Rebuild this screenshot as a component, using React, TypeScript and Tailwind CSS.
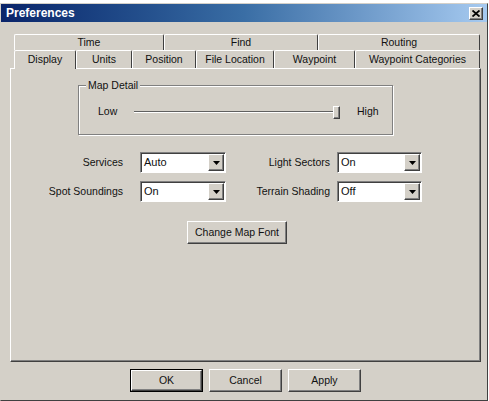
const raised =
  "border border-t-white border-l-white border-r-[#404040] border-b-[#404040] shadow-[inset_-1px_-1px_0_#808080]";
const sunken =
  "border border-t-[#808080] border-l-[#808080] border-r-white border-b-white shadow-[inset_1px_1px_0_#404040]";

const backTabs = [
  { label: "Time", w: "w-[150px]" },
  { label: "Find", w: "w-[154px]" },
  { label: "Routing", w: "w-[162px]" },
];

const frontTabs = [
  { label: "Units", w: "w-[56px]" },
  { label: "Position", w: "w-[64px]" },
  { label: "File Location", w: "w-[78px]" },
  { label: "Waypoint", w: "w-[81px]" },
  { label: "Waypoint Categories", w: "w-[125px]" },
];

function Combo({ value, width }: { value: string; width: string }) {
  return (
    <div className={`flex h-[21px] ${width} bg-white ${sunken} p-[1px] pl-[2px]`}>
      <span className="flex-1 pl-[1px] text-[11px] leading-[17px]">{value}</span>
      <span className={`flex h-[17px] w-[16px] items-center justify-center bg-[#d4d0c8] ${raised}`}>
        <svg width="7" height="4" viewBox="0 0 7 4">
          <path d="M0 0h7L3.5 4z" fill="#000" />
        </svg>
      </span>
    </div>
  );
}

function Row({ left, leftValue, right, rightValue }: { left: string; leftValue: string; right: string; rightValue: string }) {
  return (
    <div className="flex h-[21px] items-center">
      <span className="w-[112px] text-right text-[10.5px]">{left}</span>
      <div className="ml-[17px]">
        <Combo value={leftValue} width="w-[86px]" />
      </div>
      <span className="w-[104px] text-right text-[10.5px]">{right}</span>
      <div className="ml-[7px]">
        <Combo value={rightValue} width="w-[85px]" />
      </div>
    </div>
  );
}

function PushButton({ label, width, isDefault = false }: { label: string; width: string; isDefault?: boolean }) {
  if (isDefault) {
    return (
      <div className={`h-[23px] ${width} border border-black`}>
        <div className={`flex h-full w-full items-center justify-center text-[10.5px] ${raised}`}>{label}</div>
      </div>
    );
  }
  return <div className={`flex h-[23px] ${width} items-center justify-center text-[10.5px] ${raised}`}>{label}</div>;
}

export default function App() {
  return (
    <div className="h-[401px] w-[489px] overflow-hidden bg-white font-['Liberation_Sans',Arial,sans-serif] text-[#111]">
      <div className="mt-[3px] flex h-[398px] w-[488px] flex-col border border-t-[#d4d0c8] border-l-[#d4d0c8] border-r-[#404040] border-b-[#404040] bg-[#d4d0c8]">
        {/* title bar */}
        <div className="flex h-[18px] items-center justify-between bg-gradient-to-r from-[#0a246a] via-[#3a6ea5] to-[#a6caf0] pl-[5px] pr-[4px]">
          <span className="text-[12px] font-bold text-white">Preferences</span>
          <span className={`flex h-[13px] w-[14px] items-center justify-center bg-[#d4d0c8] ${raised}`}>
            <svg width="8" height="7" viewBox="0 0 8 7">
              <path d="M0.5 0.5l7 6M7.5 0.5l-7 6" stroke="#000" strokeWidth="1.8" />
            </svg>
          </span>
        </div>

        {/* tab control */}
        <div className="ml-[9px] mt-[12px] w-[471px]">
          <div className="ml-[4px] flex h-[16px]">
            {backTabs.map((t) => (
              <div
                key={t.label}
                className={`${t.w} flex items-center justify-center rounded-t-[2px] border-t border-l border-r border-t-white border-l-white border-r-[#404040] text-[10.5px]`}
              >
                {t.label}
              </div>
            ))}
          </div>
          <div className="ml-[4px] flex h-[18px] items-end">
            <div className="relative z-10 -mb-px flex h-[19px] w-[62px] items-center justify-center rounded-t-[2px] border-t border-l border-r border-t-white border-l-white border-r-[#404040] bg-[#d4d0c8] text-[10.5px]">
              Display
            </div>
            {frontTabs.map((t) => (
              <div
                key={t.label}
                className={`${t.w} flex h-[18px] items-center justify-center rounded-t-[2px] border-t border-l border-r border-t-white border-l-white border-r-[#404040] text-[10.5px]`}
              >
                {t.label}
              </div>
            ))}
          </div>

          {/* panel */}
          <div className={`h-[294px] w-[471px] ${raised}`}>
            <div className="relative ml-[67px] mt-[16px] h-[50px] w-[315px] border border-[#808080] shadow-[1px_1px_0_#fff,inset_1px_1px_0_#fff]">
              <span className="absolute -top-[8px] left-[7px] bg-[#d4d0c8] px-[2px] text-[10.5px]">Map Detail</span>
              <div className="flex h-full items-center pl-[19px] pt-[4px]">
                <span className="w-[20px] text-[10.5px]">Low</span>
                <div className="ml-[16px] flex w-[206px] items-center">
                  <div className="h-[2px] flex-1 border-t border-b border-t-[#606060] border-b-white" />
                  <div className={`h-[13px] w-[7px] bg-[#d4d0c8] ${raised}`} />
                </div>
                <span className="ml-[17px] text-[10.5px]">High</span>
              </div>
            </div>

            <div className="mt-[17px] flex flex-col gap-[8px]">
              <Row left="Services" leftValue="Auto" right="Light Sectors" rightValue="On" />
              <Row left="Spot Soundings" leftValue="On" right="Terrain Shading" rightValue="Off" />
            </div>

            <div className="ml-[176px] mt-[19px]">
              <PushButton label="Change Map Font" width="w-[100px]" />
            </div>
          </div>
        </div>

        {/* dialog buttons */}
        <div className="ml-[129px] mt-[7px] flex gap-[6px]">
          <PushButton label="OK" width="w-[73px]" isDefault />
          <PushButton label="Cancel" width="w-[73px]" />
          <PushButton label="Apply" width="w-[73px]" />
        </div>
      </div>
    </div>
  );
}
